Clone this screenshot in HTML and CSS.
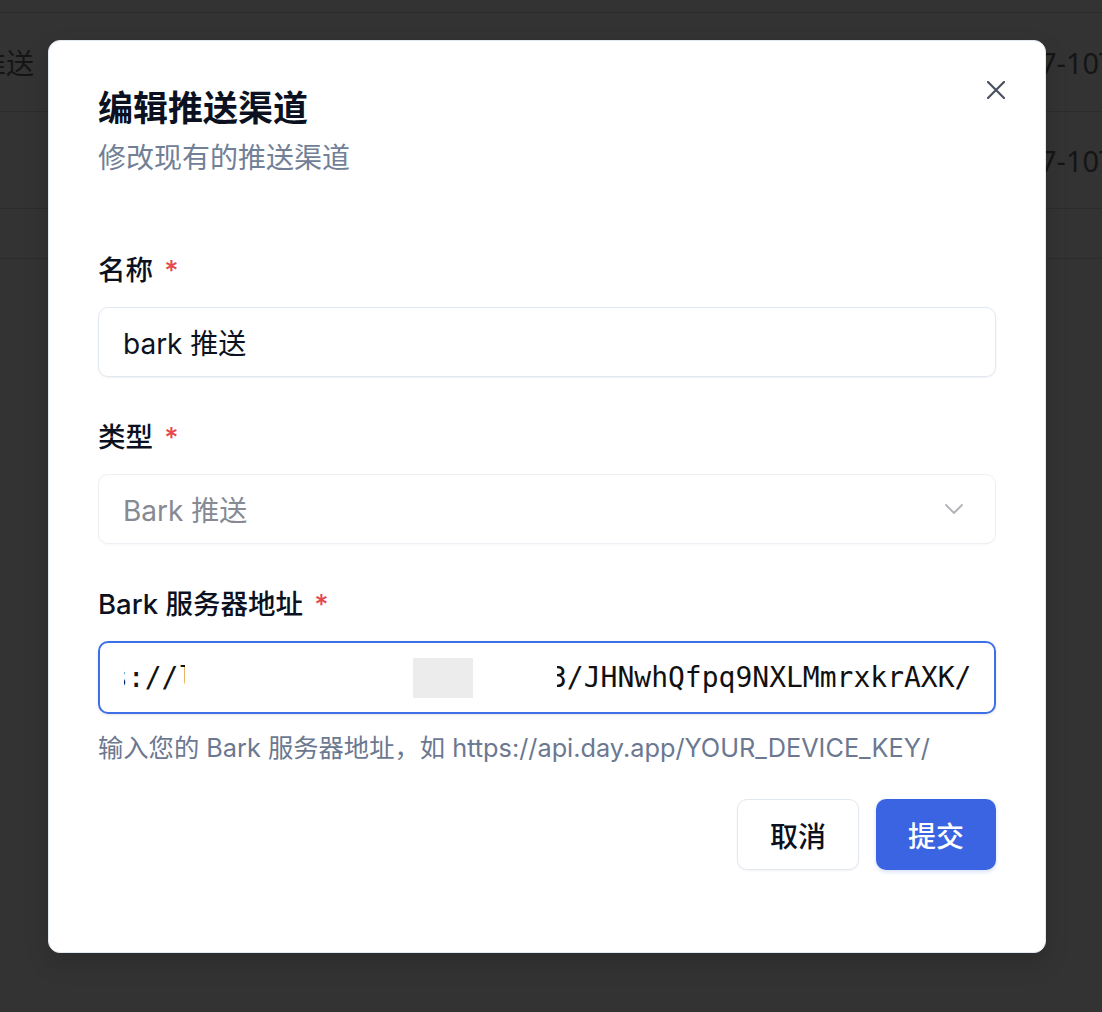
FILE: index.html
```html
<!DOCTYPE html>
<html lang="zh-CN">
<head>
<meta charset="utf-8">
<title>编辑推送渠道</title>
<link rel="stylesheet" href="styles.css">
</head>
<body>
<div class="backdrop">
  <div class="bg-strip"></div>
  <div class="bg-row bg-row-a">
    <div class="bg-left"><span>推送</span></div>
    <div class="bg-mid"></div>
    <div class="bg-right">7-10T</div>
  </div>
  <div class="bg-row bg-row-b">
    <div class="bg-left"></div>
    <div class="bg-mid"></div>
    <div class="bg-right">7-10T</div>
  </div>
  <div class="bg-row bg-row-short"></div>
</div>

<div class="modal">
  <button class="close" aria-label="关闭">
    <svg width="18" height="18" viewBox="0 0 18 18"><path d="M1 1 L17 17 M17 1 L1 17" stroke="#4b5060" stroke-width="2.2" stroke-linecap="round" fill="none"/></svg>
  </button>
  <h2 class="title">编辑推送渠道</h2>
  <p class="subtitle">修改现有的推送渠道</p>

  <div class="form">
    <div class="field">
      <div class="label">名称 <span class="req">*</span></div>
      <div class="input">bark 推送</div>
    </div>
    <div class="field">
      <div class="label">类型 <span class="req">*</span></div>
      <div class="input select">
        <span class="placeholder">Bark 推送</span>
        <svg class="chev" width="20" height="12" viewBox="0 0 20 12"><path d="M2 2 L10 10 L18 2" stroke="#b4b6bb" stroke-width="2" fill="none" stroke-linecap="round" stroke-linejoin="round"/></svg>
      </div>
    </div>
    <div class="field">
      <div class="label">Bark 服务器地址 <span class="req">*</span></div>
      <div class="input focused">
        <div class="url">
          <span class="seg seg1"><span class="seg1-text">s://l</span></span>
          <span class="gap1"></span>
          <span class="redact"></span>
          <span class="gap2"></span>
          <span class="seg seg3"><span class="seg3-text">3/JHNwhQfpq9NXLMmrxkrAXK/</span></span>
        </div>
      </div>
      <div class="help">输入您的 Bark 服务器地址，如 https://api.day.app/YOUR_DEVICE_KEY/</div>
    </div>
  </div>

  <div class="actions">
    <button class="btn btn-cancel">取消</button>
    <button class="btn btn-primary">提交</button>
  </div>
</div>
</body>
</html>
```
FILE: styles.css
```css
* { box-sizing: border-box; }
html, body { margin: 0; padding: 0; }
body {
  width: 1102px;
  height: 1012px;
  background: #333333;
  font-family: Inter, "Noto Sans CJK SC", sans-serif;
  overflow: hidden;
  position: relative;
}

/* dimmed page behind the dialog */
.backdrop { width: 1102px; }
.bg-strip { height: 13px; border-bottom: 1px solid #2c2c2c; }
.bg-row {
  display: grid;
  grid-template-columns: 34px 1006px 62px;
  align-items: center;
  border-bottom: 1px solid #2c2c2c;
  color: #151515;
  font-size: 28px;
  overflow: hidden;
}
.bg-row-a { height: 99px; }
.bg-row-b { height: 97px; }
.bg-row-short { height: 50px; }
.bg-left { display: flex; justify-content: flex-end; white-space: nowrap; }
.bg-left span { flex: none; }
.bg-right {
  white-space: nowrap;
  font-family: "Noto Sans", sans-serif;
  font-size: 29px;
}

/* dialog */
.modal {
  position: absolute;
  left: 48px;
  top: 40px;
  width: 998px;
  height: 913px;
  background: #ffffff;
  border: 1px solid #e2e8f0;
  border-radius: 12px;
  padding: 46px 49px 0 49px;
  box-shadow: 0 10px 25px rgba(0,0,0,0.15);
}
.close {
  position: absolute;
  top: 39px;
  right: 39px;
  width: 20px;
  height: 20px;
  padding: 0;
  border: 0;
  background: transparent;
  display: flex;
  align-items: center;
  justify-content: center;
}
.title {
  margin: 0;
  font-size: 35px;
  line-height: 42px;
  font-weight: 700;
  color: #0b1120;
}
.subtitle {
  margin: 11px 0 0 0;
  font-size: 28px;
  line-height: 36px;
  color: #718096;
}

.form {
  margin-top: 76px;
  display: flex;
  flex-direction: column;
  gap: 42px;
}
.field { display: flex; flex-direction: column; }
.label {
  font-size: 27.5px;
  line-height: 36px;
  font-weight: 500;
  color: #0b1120;
  margin-bottom: 19px;
}
.req { color: #e5484d; margin-left: 4px; }

.input {
  height: 70px;
  border: 1px solid #e2e8f0;
  border-radius: 10px;
  padding: 0 24px;
  display: flex;
  align-items: center;
  font-size: 28px;
  color: #0b1120;
  box-shadow: 0 1px 2px rgba(15,23,42,0.06);
}
.select {
  border-color: #eceff3;
  justify-content: space-between;
  box-shadow: 0 1px 2px rgba(15,23,42,0.03);
}
.placeholder { color: #858a93; }
.chev { margin-right: 7px; }

.focused {
  height: 73px;
  border: 2px solid #3d6fe6;
  padding: 0 24px 0 24px;
  box-shadow: 0 1px 3px rgba(15,23,42,0.12);
}
.url {
  display: flex;
  align-items: center;
  height: 40px;
  width: 100%;
  overflow: hidden;
  font-family: "DejaVu Sans Mono", monospace;
  font-size: 28px;
  color: #111111;
  white-space: nowrap;
}
.seg { overflow: hidden; display: block; flex: none; }
.seg1 { width: 61px; }
.seg1-text { display: block; margin-left: -13px; }
.gap1 { width: 228px; flex: none; }
.redact { width: 60px; height: 40px; background: #ececec; flex: none; }
.gap2 { width: 84px; flex: none; }
.seg3 { width: 420px; }
.seg3-text { display: block; margin-left: -7px; }

.help {
  margin-top: 16px;
  font-size: 25.3px;
  line-height: 36px;
  color: #6b7890;
}

.actions {
  margin-top: 33px;
  display: flex;
  justify-content: flex-end;
  gap: 17px;
}
.btn {
  height: 71px;
  border-radius: 10px;
  font-family: Inter, "Noto Sans CJK SC", sans-serif;
  font-size: 28px;
  font-weight: 500;
  cursor: pointer;
}
.btn-cancel {
  width: 122px;
  background: #ffffff;
  border: 1px solid #e2e8f0;
  color: #0b1120;
  box-shadow: 0 1px 2px rgba(15,23,42,0.05);
}
.btn-primary {
  width: 120px;
  background: #3b64e3;
  border: 0;
  color: #ffffff;
  box-shadow: 0 2px 4px rgba(59,100,227,0.2);
}
```
